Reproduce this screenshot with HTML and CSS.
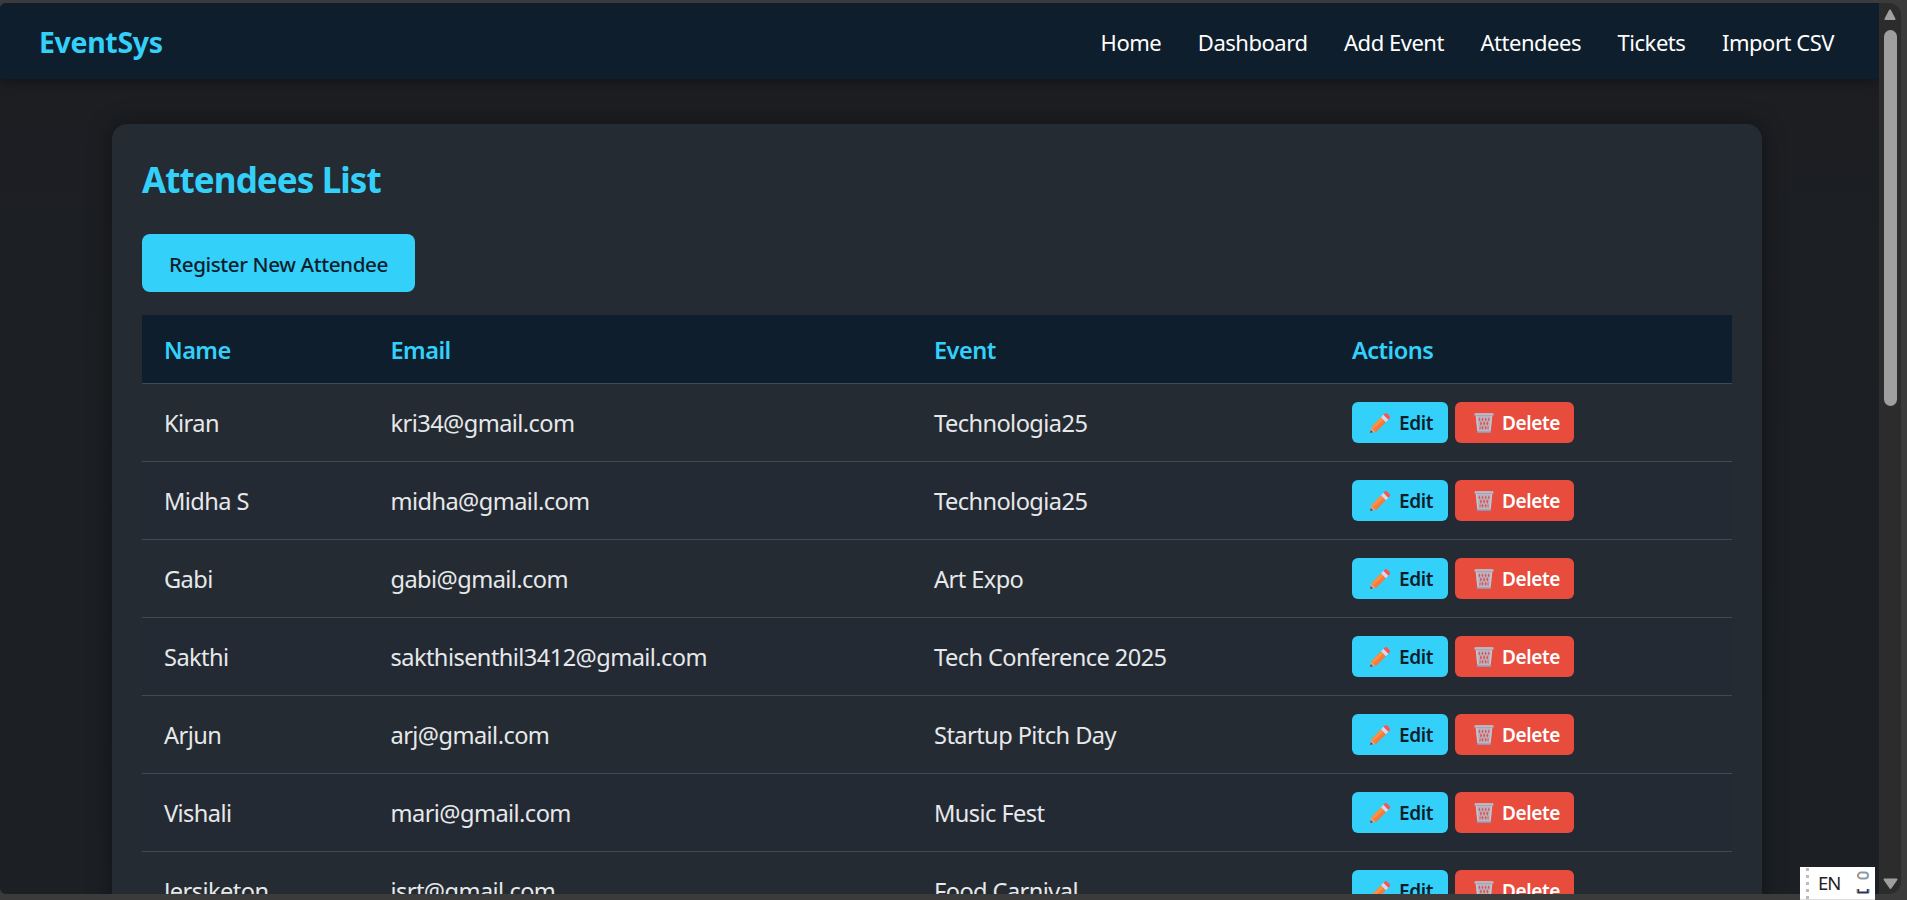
FILE: index.html
```html
<!DOCTYPE html>
<html lang="en">
<head>
<meta charset="utf-8">
<title>EventSys - Attendees</title>
<link rel="stylesheet" href="styles.css">
</head>
<body>
<svg class="defs" width="0" height="0" aria-hidden="true">
  <defs>
    <linearGradient id="wood" x1="0" y1="0" x2="1" y2="1">
      <stop offset="0" stop-color="#ffa03c"/><stop offset="1" stop-color="#f0603c"/>
    </linearGradient>
    <symbol id="pencil" viewBox="0 0 22 22">
      <path d="M1 21l1.500-6 4.700 4.500z" fill="#d9a58c"/>
      <path d="M1 21l.8-3 2.300 2.200z" fill="#5b4658"/>
      <path d="M2.200 15.200L12 5.300l4.900 4.900-9.900 9.700c-.9-.2-1.300-.7-1.500-1.500-1-.1-1.400-.5-1.600-1.500-.8-.1-1.400-.8-1.700-1.700z" fill="url(#wood)"/>
      <path d="M4.200 15.900l8.900-8.800" stroke="#ff9f45" stroke-width="1.200"/>
      <path d="M12 5.300l2.500-2.500 4.900 4.900-2.500 2.500z" fill="#dcd6ea"/>
      <path d="M14.500 2.800l1.300-1.300q1.200-.9 2.400.1l2.400 2.400q1 1.100.1 2.300l-1.300 1.400z" fill="#fb5650"/>
    </symbol>
    <symbol id="trash" viewBox="0 0 22 22">
      <path d="M2.600 3.500L4.300 20h13.400l1.700-16.500z" fill="#b9b2c2"/>
      <path d="M6.300 5.200l1 2.200-1 2.200-.9-2.200zM9.500 5.200l1 2.200-1 2.200-1-2.200zM12.700 5.200l1 2.200-1 2.200-1-2.200zM15.800 5.200l.9 2.200-.9 2.200-1-2.200zM7.900 9l1.100 2.500-1.100 2.500-1.100-2.500zM11.100 9l1.100 2.500-1.100 2.500L10 11.500zM14.300 9l1.100 2.500-1.100 2.500-1.100-2.500zM6.800 13.500l1 2.200-.6 2h-.8zM9.500 13.500l1.100 2.300-1.100 2.200-1.100-2.200zM12.700 13.500l1.100 2.300-1.100 2.200-1.100-2.200zM15.400 13.500l-1 2.200.6 2h.5z" fill="#dc5750"/>
      <path d="M3.600 4l1.500 15M18.400 4l-1.500 15" stroke="#cbc5d3" stroke-width="1.200"/>
      <rect x="1.300" y="1.200" width="19.400" height="2.900" rx="1" fill="#aaa3b3"/>
      <rect x="1.800" y="1.500" width="18.400" height="1" rx=".5" fill="#d2cdd8"/>
      <rect x="3.700" y="18.400" width="14.600" height="2.600" rx=".9" fill="#9a91aa"/>
      <path d="M4.800 18.900h12.400" stroke="#cbc4d4" stroke-width=".9"/>
    </symbol>
  </defs>
</svg>
<div class="window">
  <div class="page">
    <nav class="navbar">
      <div class="brand">EventSys</div>
      <ul class="links">
        <li>Home</li><li>Dashboard</li><li>Add Event</li><li>Attendees</li><li>Tickets</li><li>Import CSV</li>
      </ul>
    </nav>
    <main class="card">
      <h2>Attendees List</h2>
      <a class="register">Register New Attendee</a>
      <table>
        <colgroup><col class="c-name"><col class="c-email"><col class="c-event"><col></colgroup>
        <thead><tr><th>Name</th><th>Email</th><th>Event</th><th>Actions</th></tr></thead>
        <tbody>
          <tr><td>Kiran</td><td>kri34@gmail.com</td><td>Technologia25</td><td><div class="actions"><a class="btn edit"><svg><use href="#pencil"/></svg>Edit</a><a class="btn delete"><svg><use href="#trash"/></svg>Delete</a></div></td></tr>
          <tr><td>Midha S</td><td>midha@gmail.com</td><td>Technologia25</td><td><div class="actions"><a class="btn edit"><svg><use href="#pencil"/></svg>Edit</a><a class="btn delete"><svg><use href="#trash"/></svg>Delete</a></div></td></tr>
          <tr><td>Gabi</td><td>gabi@gmail.com</td><td>Art Expo</td><td><div class="actions"><a class="btn edit"><svg><use href="#pencil"/></svg>Edit</a><a class="btn delete"><svg><use href="#trash"/></svg>Delete</a></div></td></tr>
          <tr><td>Sakthi</td><td>sakthisenthil3412@gmail.com</td><td>Tech Conference 2025</td><td><div class="actions"><a class="btn edit"><svg><use href="#pencil"/></svg>Edit</a><a class="btn delete"><svg><use href="#trash"/></svg>Delete</a></div></td></tr>
          <tr><td>Arjun</td><td>arj@gmail.com</td><td>Startup Pitch Day</td><td><div class="actions"><a class="btn edit"><svg><use href="#pencil"/></svg>Edit</a><a class="btn delete"><svg><use href="#trash"/></svg>Delete</a></div></td></tr>
          <tr><td>Vishali</td><td>mari@gmail.com</td><td>Music Fest</td><td><div class="actions"><a class="btn edit"><svg><use href="#pencil"/></svg>Edit</a><a class="btn delete"><svg><use href="#trash"/></svg>Delete</a></div></td></tr>
          <tr><td>Jersiketon</td><td>jsrt@gmail.com</td><td>Food Carnival</td><td><div class="actions"><a class="btn edit"><svg><use href="#pencil"/></svg>Edit</a><a class="btn delete"><svg><use href="#trash"/></svg>Delete</a></div></td></tr>
        </tbody>
      </table>
    </main>
  </div>
  <div class="scrollbar">
    <svg width="12" height="12" viewBox="0 0 12 12"><path d="M6 1.500L10.500 10h-9z" fill="#9f9f9f" stroke="#9f9f9f" stroke-width="2" stroke-linejoin="round"/></svg>
    <div class="thumb"></div>
    <svg class="down" width="15" height="12" viewBox="0 0 15 12"><path d="M1.500 1.500h12L7.500 10z" fill="#9f9f9f" stroke="#9f9f9f" stroke-width="2" stroke-linejoin="round"/></svg>
  </div>
</div>
<div class="langbar">
  <span class="grip"></span>
  <span class="lang">EN</span>
  <svg width="14" height="24" viewBox="0 0 14 24" fill="none">
    <rect x="2" y="1.500" width="10" height="6" rx="3" stroke="#8d97a6" stroke-width="1.800"/>
    <path d="M3.500 1.700q-2 .8-2 2.800t2 2.800" stroke="#d0905c" stroke-width="1"/>
    <path d="M10.500 1.700q2 .8 2 2.800t-2 2.800" stroke="#6aa5df" stroke-width="1"/>
    <path d="M2.200 18v3.500h9.600V18" stroke="#28324e" stroke-width="2"/>
    <path d="M1 18v4" stroke="#d0905c"/><path d="M13 18v4" stroke="#4a90df"/>
  </svg>
</div>
</body>
</html>
```
FILE: styles.css
```css
* { box-sizing: border-box; }

body {
  margin: 0;
  height: 900px;
  overflow: hidden;
  background: #3b3b3b;
  color: #e6e8ea;
  font-family: "Noto Sans", "Open Sans", sans-serif;
}

.defs { position: absolute; }

.window {
  display: flex;
  width: 1901px;
  height: 891px;
  margin-top: 3px;
  overflow: hidden;
  border-radius: 6px 12px 12px 6px;
  background: #2c2c2c;
}

.page {
  width: 1879px;
  height: 891px;
  overflow: hidden;
  background: linear-gradient(to bottom, #1c1e22, #1c2024);
}

.navbar {
  display: flex;
  align-items: center;
  justify-content: space-between;
  height: 76px;
  padding: 0 45px 0 39px;
  background: #0f1e2d;
  box-shadow: 0 2px 12px rgba(0, 0, 0, 0.4);
}

.brand {
  padding-top: 2px;
  color: #33d1fa;
  font-size: 28.5px;
  font-weight: 700;
  letter-spacing: -0.35px;
}

.links {
  display: flex;
  gap: 36.5px;
  margin: 0;
  padding: 2px 0 0;
  list-style: none;
  color: #fff;
  font-size: 22px;
  letter-spacing: -0.47px;
}

.card {
  width: 1650px;
  height: 1100px;
  margin: 45px 0 0 112px;
  padding: 30px;
  border-radius: 15px;
  background: #252b32;
  box-shadow: 0 0 25px rgba(0, 0, 0, 0.4);
}

h2 {
  margin: 0 0 28px;
  color: #33d1fa;
  font-size: 35px;
  line-height: 52px;
  letter-spacing: -0.92px;
}

.register {
  display: flex;
  align-items: center;
  justify-content: center;
  width: 273px;
  height: 58px;
  padding-top: 2px;
  border-radius: 8px;
  background: #33d1fa;
  color: #0f1e2d;
  font-size: 20.7px;
  font-weight: 500;
  letter-spacing: -0.42px;
}

table {
  width: 1590px;
  margin-top: 23px;
  border-collapse: separate;
  border-spacing: 0;
  table-layout: fixed;
  font-size: 23.6px;
  letter-spacing: -0.57px;
}

.c-name { width: 226.5px; }
.c-email { width: 543.5px; }
.c-event { width: 418px; }

th, td {
  height: 78px;
  padding: 0 22px;
  border-bottom: 1px solid #404955;
  text-align: left;
  vertical-align: middle;
  white-space: nowrap;
}

th {
  height: 69px;
  padding-top: 1px;
  background: #0f1e2d;
  color: #33d1fa;
  font-weight: 600;
}

tbody tr:nth-child(even) { background: #242a34; }

.actions { display: flex; gap: 7px; }

.btn {
  display: flex;
  align-items: center;
  gap: 8px;
  width: 96px;
  height: 41px;
  padding-left: 17px;
  border-radius: 6px;
  font-size: 19px;
  font-weight: 600;
  letter-spacing: -0.4px;
}

.btn svg { width: 22px; height: 22px; flex: none; }

.edit { background: #33d1fa; color: #0f1e2d; }
.delete { width: 119px; padding-left: 18px; gap: 7px; background: #e84c3d; color: #fff; }

.scrollbar {
  display: flex;
  flex-direction: column;
  align-items: center;
  width: 22px;
  height: 891px;
  padding: 6px 0 4px;
}

.thumb {
  width: 13px;
  height: 376px;
  margin-top: 9px;
  border-radius: 7px;
  background: #9f9f9f;
}

.down { margin-top: auto; }

.langbar {
  position: absolute;
  left: 1800px;
  top: 867px;
  display: flex;
  align-items: center;
  width: 75px;
  height: 33px;
  padding-left: 6px;
  border-bottom: 1px solid #ddd;
  background: #fff;
  color: #222;
}

.grip {
  flex: none;
  width: 3px;
  height: 31px;
  background: repeating-linear-gradient(to bottom, #bbb 0 3px, #fff 3px 7px);
}

.lang {
  flex: none;
  width: 37px;
  padding: 0 0 2px 9px;
  font-size: 18.5px;
  letter-spacing: -1px;
}

.langbar > svg { flex: none; margin: 0 0 0 10px; }
```
